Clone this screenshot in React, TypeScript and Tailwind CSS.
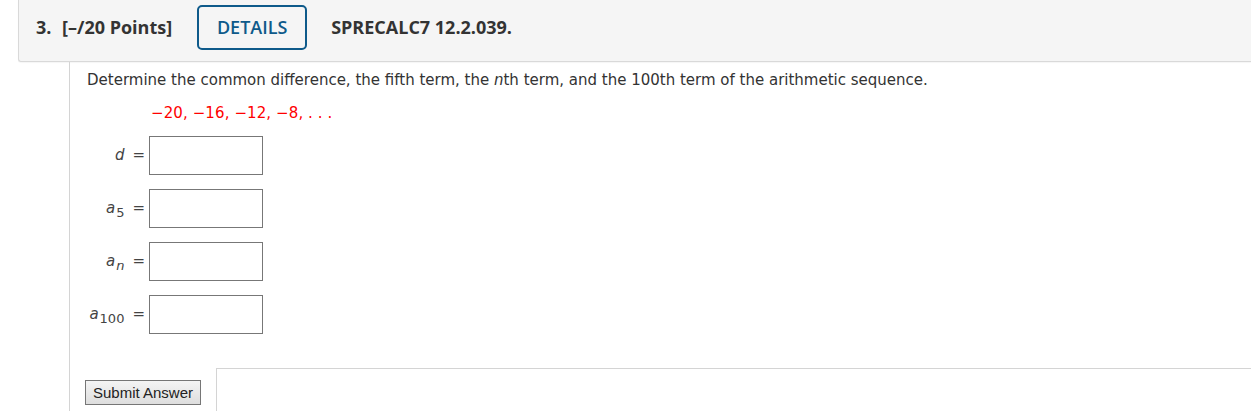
import React from 'react'

const headerFont = { fontFamily: '"Open Sans", "Liberation Sans", sans-serif' }
const bodyFont = { fontFamily: '"DejaVu Sans", Verdana, sans-serif' }

type Row = { key: string; label: React.ReactNode }

const rows: Row[] = [
  { key: 'd', label: <i>d</i> },
  {
    key: 'a5',
    label: (
      <>
        <i>a</i>
        <span className="relative top-[4px] ml-[1px] text-[13px]">5</span>
      </>
    ),
  },
  {
    key: 'an',
    label: (
      <>
        <i>a</i>
        <span className="relative top-[4px] ml-[1px] text-[13px]">
          <i>n</i>
        </span>
      </>
    ),
  },
  {
    key: 'a100',
    label: (
      <>
        <i>a</i>
        <span className="relative top-[4px] ml-[1px] text-[13px]">100</span>
      </>
    ),
  },
]

export default function App() {
  return (
    <div className="w-[1251px] h-[411px] overflow-hidden bg-white pl-[18px]">
      {/* Question header */}
      <div
        className="h-[62px] bg-[#f5f5f5] border-l border-b border-[#d9d9d9] rounded-bl-[3px] pt-[5px] pl-[17px] shadow-[0_1px_1px_rgba(0,0,0,0.04)]"
        style={headerFont}
      >
        <div className="flex items-center h-[45px] text-[18px] font-bold text-[#333]">
          <span className="w-[26px]">3.</span>
          <span>[–/20 Points]</span>
          <div className="ml-[25px] w-[110px] h-[45px] flex items-center justify-center border-2 border-[#0e5a8a] rounded-[5px] text-[#0e5a8a] font-semibold">
            DETAILS
          </div>
          <span className="ml-[24px]">SPRECALC7 12.2.039.</span>
        </div>
      </div>

      {/* Question body */}
      <div className="ml-[51px] h-[349px] border-l border-[#d4d4d4] pl-[17px] pt-[9px] text-[#333]" style={bodyFont}>
        <p className="text-[15px] leading-[18px]">
          Determine the common difference, the fifth term, the <i>n</i>th term, and the 100th term of the arithmetic
          sequence.
        </p>
        <p className="ml-[64px] mt-[15px] text-[15px] leading-[18px] text-[#ff0000] tracking-[0.1px]">
          −20, −16, −12, −8, . . .
        </p>

        <div className="mt-[14px] flex flex-col gap-[14px]">
          {rows.map((row) => (
            <div key={row.key} className="flex items-center">
              <div className="w-[58px] flex justify-end items-center text-[15px] text-[#444] whitespace-nowrap">
                <span>{row.label}</span>
                <span className="ml-[8px]">=</span>
              </div>
              <div className="ml-[4px] w-[114px] h-[39px] border border-[#777] bg-white" />
            </div>
          ))}
        </div>

        <div className="mt-[34px] flex items-start">
          <button
            className="mt-[12px] -ml-[2px] h-[25px] px-[7px] border border-[#767676] bg-gradient-to-b from-[#f4f4f4] to-[#dedede] text-[15px] leading-[20px] text-[#222]"
            style={{ fontFamily: '"Liberation Sans", Arial, sans-serif' }}
          >
            Submit Answer
          </button>
          <div className="ml-[15px] flex-1 h-[60px] border-t border-l border-[#d4d4d4]" />
        </div>
      </div>
    </div>
  )
}
